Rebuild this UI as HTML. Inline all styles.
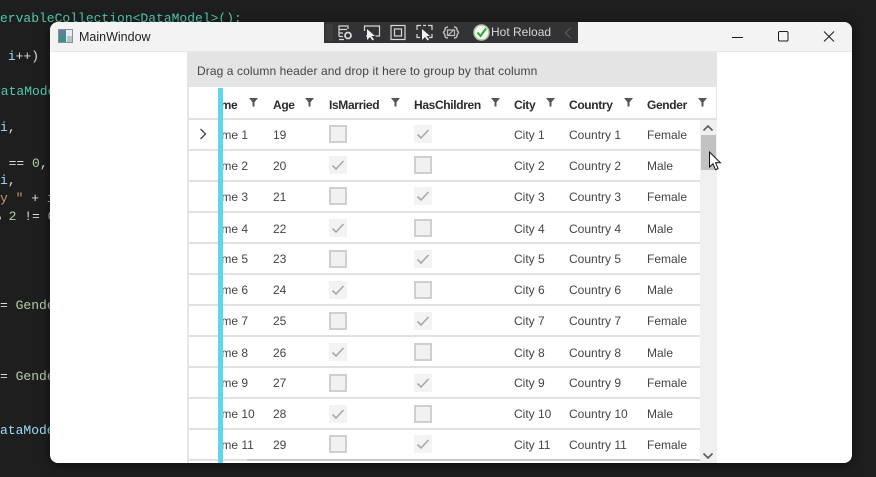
<!DOCTYPE html>
<html><head><meta charset="utf-8">
<style>
html,body{margin:0;padding:0;width:876px;height:477px;overflow:hidden;background:#1e1e1e}
body{position:relative;font-family:"Liberation Sans",sans-serif}
.c{position:absolute;font:normal 13px/17px "Liberation Mono",monospace;white-space:pre;color:#4ec9b0;left:0}
.b{color:#9cdcfe}.g{color:#b5cea8}.w{color:#dcdcdc}.o{color:#ce9178}
#win{position:absolute;left:50px;top:22px;width:802px;height:441px;background:#fff;border-radius:8px;overflow:hidden;box-shadow:0 2px 10px rgba(0,0,0,.55)}
#tb{position:absolute;left:0;top:0;width:802px;height:29px;background:#f3f3f3;border-bottom:1px solid #e9e9e9}
#title{position:absolute;left:29px;top:0;font-size:12.5px;line-height:30px;color:#222}
#grid{position:absolute;left:137px;top:30px;width:530px;height:411px;overflow:hidden}
#gp{position:absolute;left:0;top:0;width:530px;height:35px;background:#e4e4e4;font-size:12px;line-height:38px;color:#444;text-indent:10px;letter-spacing:.09px}
.t{position:absolute;font-size:12px;line-height:16px;color:#444;white-space:nowrap}
.h{position:absolute;top:45px;font-size:12px;line-height:16px;font-weight:bold;color:#2b2b2b;white-space:nowrap;letter-spacing:-.35px}
.l{position:absolute;left:1px;width:512px;height:2px;background:#e1e1e1}
.cb{position:absolute;width:14px;height:14px;background:#f1f1f1;border:2px solid #cfcfcf}
.ck{position:absolute;width:18px;height:18px;background:#f3f3f3}
.f{position:absolute;top:46px}
.m{position:absolute;left:2px;width:29px;height:29px;background:#fff}
</style></head><body>
<div class="c" style="top:10px">ervableCollection&lt;DataModel&gt;();</div>
<div class="c w" style="top:48px"> <span class="b">i</span>++)</div>
<div class="c" style="top:83px;left:-7px">DataMode</div>
<div class="c b" style="top:119px">i<span class="w">,</span></div>
<div class="c w" style="top:155px;left:-7px">  == <span class="g">0</span>,</div>
<div class="c b" style="top:172px">i<span class="w">,</span></div>
<div class="c o" style="top:190px">y " <span class="w">+</span> <span class="b">i</span></div>
<div class="c w" style="top:208px;left:-7px">% <span class="g">2</span> != <span class="g">0</span></div>
<div class="c w" style="top:297px">= <span class="g">Gende</span></div>
<div class="c w" style="top:368px">= <span class="g">Gende</span></div>
<div class="c b" style="top:422px">ataMode</div>

<div id="win">
<div id="tb">
<svg style="position:absolute;left:8px;top:7px" width="15" height="14"><rect x=".5" y=".5" width="14" height="13" fill="#e8eef0" stroke="#8a8f94"/><rect x="1" y="1" width="7" height="12" fill="#3f8f86"/><rect x="1" y="1" width="7" height="5" fill="#5f7f9c"/><rect x="9" y="7" width="5" height="6" fill="#b5c4d0"/></svg>
<div id="title">MainWindow</div>
<svg style="position:absolute;left:677px;top:9px" width="110" height="12" fill="none" stroke="#1c1c1c" stroke-width="1"><path d="M5 6.5h11"/><rect x="51.5" y=".5" width="9.5" height="9.5" rx="1.3"/><path d="M97 .5l10 10M107 .5l-10 10"/></svg>
</div>
<div id="grid">
<div id="gp">Drag a column header and drop it here to group by that column</div>
<div style="position:absolute;left:0;top:35px;width:2px;height:376px;background:#e6e6e6"></div>
<div style="position:absolute;right:0;top:35px;width:1px;height:32px;background:#e6e6e6"></div>

<div class="h" style="left:19px">Name</div><div class="h" style="left:86px">Age</div><div class="h" style="left:142px">IsMarried</div><div class="h" style="left:227px">HasChildren</div><div class="h" style="left:327px">City</div><div class="h" style="left:382px">Country</div><div class="h" style="left:460px">Gender</div>
<svg class="f" style="left:62px" width="9" height="9"><path d="M0 0h9L5.5 4.2V8.5h-2V4.2z" fill="#555"/></svg>
<svg class="f" style="left:118px" width="9" height="9"><path d="M0 0h9L5.5 4.2V8.5h-2V4.2z" fill="#555"/></svg>
<svg class="f" style="left:204px" width="9" height="9"><path d="M0 0h9L5.5 4.2V8.5h-2V4.2z" fill="#555"/></svg>
<svg class="f" style="left:304px" width="9" height="9"><path d="M0 0h9L5.5 4.2V8.5h-2V4.2z" fill="#555"/></svg>
<svg class="f" style="left:359px" width="9" height="9"><path d="M0 0h9L5.5 4.2V8.5h-2V4.2z" fill="#555"/></svg>
<svg class="f" style="left:437px" width="9" height="9"><path d="M0 0h9L5.5 4.2V8.5h-2V4.2z" fill="#555"/></svg>
<svg class="f" style="left:511px" width="9" height="9"><path d="M0 0h9L5.5 4.2V8.5h-2V4.2z" fill="#555"/></svg>

<div class="l" style="top:66px;width:529px"></div>
<div class="l" style="top:97px"></div><div class="l" style="top:128px"></div><div class="l" style="top:159px"></div><div class="l" style="top:190px"></div><div class="l" style="top:221px"></div><div class="l" style="top:252px"></div><div class="l" style="top:283px"></div><div class="l" style="top:314px"></div><div class="l" style="top:345px"></div><div class="l" style="top:376px"></div><div class="l" style="top:407px"></div>

<!-- rows -->
<div class="t" style="left:19px;top:75px">Name 1</div><div class="t" style="left:86px;top:75px">19</div><div class="cb" style="left:142px;top:73px"></div><div class="ck" style="left:227px;top:73px"><svg width="18" height="18" fill="none" stroke="#a8a8a8" stroke-width="1.6"><path d="M3.5 9.5l3.5 3.5 7.5-8"/></svg></div><div class="t" style="left:327px;top:75px">City 1</div><div class="t" style="left:382px;top:75px">Country 1</div><div class="t" style="left:460px;top:75px">Female</div>
<div class="t" style="left:19px;top:106px">Name 2</div><div class="t" style="left:86px;top:106px">20</div><div class="ck" style="left:142px;top:104px"><svg width="18" height="18" fill="none" stroke="#a8a8a8" stroke-width="1.6"><path d="M3.5 9.5l3.5 3.5 7.5-8"/></svg></div><div class="cb" style="left:227px;top:104px"></div><div class="t" style="left:327px;top:106px">City 2</div><div class="t" style="left:382px;top:106px">Country 2</div><div class="t" style="left:460px;top:106px">Male</div>
<div class="t" style="left:19px;top:137px">Name 3</div><div class="t" style="left:86px;top:137px">21</div><div class="cb" style="left:142px;top:135px"></div><div class="ck" style="left:227px;top:135px"><svg width="18" height="18" fill="none" stroke="#a8a8a8" stroke-width="1.6"><path d="M3.5 9.5l3.5 3.5 7.5-8"/></svg></div><div class="t" style="left:327px;top:137px">City 3</div><div class="t" style="left:382px;top:137px">Country 3</div><div class="t" style="left:460px;top:137px">Female</div>
<div class="t" style="left:19px;top:169px">Name 4</div><div class="t" style="left:86px;top:169px">22</div><div class="ck" style="left:142px;top:167px"><svg width="18" height="18" fill="none" stroke="#a8a8a8" stroke-width="1.6"><path d="M3.5 9.5l3.5 3.5 7.5-8"/></svg></div><div class="cb" style="left:227px;top:167px"></div><div class="t" style="left:327px;top:169px">City 4</div><div class="t" style="left:382px;top:169px">Country 4</div><div class="t" style="left:460px;top:169px">Male</div>
<div class="t" style="left:19px;top:199px">Name 5</div><div class="t" style="left:86px;top:199px">23</div><div class="cb" style="left:142px;top:198px"></div><div class="ck" style="left:227px;top:198px"><svg width="18" height="18" fill="none" stroke="#a8a8a8" stroke-width="1.6"><path d="M3.5 9.5l3.5 3.5 7.5-8"/></svg></div><div class="t" style="left:327px;top:199px">City 5</div><div class="t" style="left:382px;top:199px">Country 5</div><div class="t" style="left:460px;top:199px">Female</div>
<div class="t" style="left:19px;top:230px">Name 6</div><div class="t" style="left:86px;top:230px">24</div><div class="ck" style="left:142px;top:229px"><svg width="18" height="18" fill="none" stroke="#a8a8a8" stroke-width="1.6"><path d="M3.5 9.5l3.5 3.5 7.5-8"/></svg></div><div class="cb" style="left:227px;top:229px"></div><div class="t" style="left:327px;top:230px">City 6</div><div class="t" style="left:382px;top:230px">Country 6</div><div class="t" style="left:460px;top:230px">Male</div>
<div class="t" style="left:19px;top:261px">Name 7</div><div class="t" style="left:86px;top:261px">25</div><div class="cb" style="left:142px;top:260px"></div><div class="ck" style="left:227px;top:260px"><svg width="18" height="18" fill="none" stroke="#a8a8a8" stroke-width="1.6"><path d="M3.5 9.5l3.5 3.5 7.5-8"/></svg></div><div class="t" style="left:327px;top:261px">City 7</div><div class="t" style="left:382px;top:261px">Country 7</div><div class="t" style="left:460px;top:261px">Female</div>
<div class="t" style="left:19px;top:293px">Name 8</div><div class="t" style="left:86px;top:293px">26</div><div class="ck" style="left:142px;top:291px"><svg width="18" height="18" fill="none" stroke="#a8a8a8" stroke-width="1.6"><path d="M3.5 9.5l3.5 3.5 7.5-8"/></svg></div><div class="cb" style="left:227px;top:291px"></div><div class="t" style="left:327px;top:293px">City 8</div><div class="t" style="left:382px;top:293px">Country 8</div><div class="t" style="left:460px;top:293px">Male</div>
<div class="t" style="left:19px;top:323px">Name 9</div><div class="t" style="left:86px;top:323px">27</div><div class="cb" style="left:142px;top:322px"></div><div class="ck" style="left:227px;top:322px"><svg width="18" height="18" fill="none" stroke="#a8a8a8" stroke-width="1.6"><path d="M3.5 9.5l3.5 3.5 7.5-8"/></svg></div><div class="t" style="left:327px;top:323px">City 9</div><div class="t" style="left:382px;top:323px">Country 9</div><div class="t" style="left:460px;top:323px">Female</div>
<div class="t" style="left:19px;top:354px">Name 10</div><div class="t" style="left:86px;top:354px">28</div><div class="ck" style="left:142px;top:353px"><svg width="18" height="18" fill="none" stroke="#a8a8a8" stroke-width="1.6"><path d="M3.5 9.5l3.5 3.5 7.5-8"/></svg></div><div class="cb" style="left:227px;top:353px"></div><div class="t" style="left:327px;top:354px">City 10</div><div class="t" style="left:382px;top:354px">Country 10</div><div class="t" style="left:460px;top:354px">Male</div>
<div class="t" style="left:19px;top:385px">Name 11</div><div class="t" style="left:86px;top:385px">29</div><div class="cb" style="left:142px;top:383px"></div><div class="ck" style="left:227px;top:383px"><svg width="18" height="18" fill="none" stroke="#a8a8a8" stroke-width="1.6"><path d="M3.5 9.5l3.5 3.5 7.5-8"/></svg></div><div class="t" style="left:327px;top:385px">City 11</div><div class="t" style="left:382px;top:385px">Country 11</div><div class="t" style="left:460px;top:385px">Female</div>

<!-- mask clips the name column at the blue drag line -->
<div class="m" style="top:36px;height:30px"></div>
<div class="m" style="top:68px"></div><div class="m" style="top:99px"></div><div class="m" style="top:130px"></div><div class="m" style="top:161px"></div><div class="m" style="top:192px"></div><div class="m" style="top:223px"></div><div class="m" style="top:254px"></div><div class="m" style="top:285px"></div><div class="m" style="top:316px"></div><div class="m" style="top:347px"></div><div class="m" style="top:378px"></div>
<div style="position:absolute;left:31px;top:36px;width:5px;height:375px;background:#5fd6ec"></div>
<svg style="position:absolute;left:12px;top:76px" width="8" height="12" fill="none" stroke="#444" stroke-width="1.3"><path d="M1.5 1l5 5-5 5"/></svg>

<!-- h scrollbar -->
<div style="position:absolute;left:60px;top:407px;width:453px;height:2px;background:#c9c9c9"></div>
<!-- v scrollbar -->
<div style="position:absolute;left:513px;top:68px;width:17px;height:343px;background:#f0f0f0"></div>
<div style="position:absolute;left:514px;top:83px;width:15px;height:35px;background:#c2c2c2"></div>
<svg style="position:absolute;left:515px;top:72px" width="12" height="8" fill="none" stroke="#5a5a5a" stroke-width="1.6"><path d="M1.5 6.5L6 2l4.500 4.500"/></svg>
<svg style="position:absolute;left:515px;top:400px" width="12" height="8" fill="none" stroke="#5a5a5a" stroke-width="1.6"><path d="M1.500 1.500L6 6l4.500-4.500"/></svg>
</div>
</div>

<!-- cursor -->
<svg style="position:absolute;left:708px;top:151px" width="14" height="20"><path d="M1.500 1v15l3.500-3.300 2.500 6 2.600-1.100-2.500-5.800h4.800z" fill="#fff" stroke="#111" stroke-width="1"/></svg>

<!-- debug toolbar -->
<div style="position:absolute;left:324px;top:22px;width:254px;height:21px;background:#333337;border:0">
<div style="position:absolute;left:2px;top:2px;width:7px;height:17px;background:repeating-linear-gradient(45deg,#444 0 1px,#333337 1px 2px)"></div>
<svg style="position:absolute;left:12px;top:1px" width="125" height="19" fill="none" stroke="#d8d8d8" stroke-width="1.200">
<path d="M3 13.500V3h9v3M3 6.500h8M3 10h4M3 13.500h4M3 16.500h5"/><circle cx="12" cy="12.500" r="3" stroke-width="1.800"/>
<path d="M28.500 8V3h15v10h-4M30 13h3"/><path d="M31 6l0 11 3-3 2.500 3.500 1.500-1-2.500-3.500h3.500z" fill="#f2f2f2" stroke="none"/>
<rect x="55" y="2.500" width="14" height="14"/><rect x="58.500" y="6" width="7" height="7"/>
<path d="M81 7V2.500h4M92 2.500h4V7M81 11v3.500h3M96 11v3.500h-3M87 2.500h3"/><path d="M86 6l0 11 3-3 2.500 3.500 1.500-1-2.500-3.500h3.500z" fill="#f2f2f2" stroke="none"/>
<path d="M112 4c-2 0-3 1-3 2.500s-1.500 2.500-1.500 3 1.500 1.500 1.500 3 1 2.500 3 2.500M118 4c2 0 3 1 3 2.500s1.500 2.500 1.500 3-1.500 1.500-1.500 3-1 2.500-3 2.500" stroke-width="1.500" stroke="#bbb"/><path d="M112 12.500l6-6M111.500 7h7v5.500h-7z" stroke="#bbb"/>
</svg>
<svg style="position:absolute;left:149px;top:2px" width="17" height="17"><circle cx="8.500" cy="8.500" r="7.500" fill="#f2f7f0" stroke="#a8c8a0" stroke-width="1.500"/><path d="M4.500 8.500l3 3.500 5.500-7.500" fill="none" stroke="#2fa32f" stroke-width="2"/></svg>
<div style="position:absolute;left:167px;top:0;font-size:12px;line-height:20px;color:#d8d8d8">Hot Reload</div>
<svg style="position:absolute;left:240px;top:5px" width="8" height="12" fill="none" stroke="#5c5c5c" stroke-width="1.200"><path d="M6.500 1l-5 5 5 5"/></svg>
</div>
</body></html>
